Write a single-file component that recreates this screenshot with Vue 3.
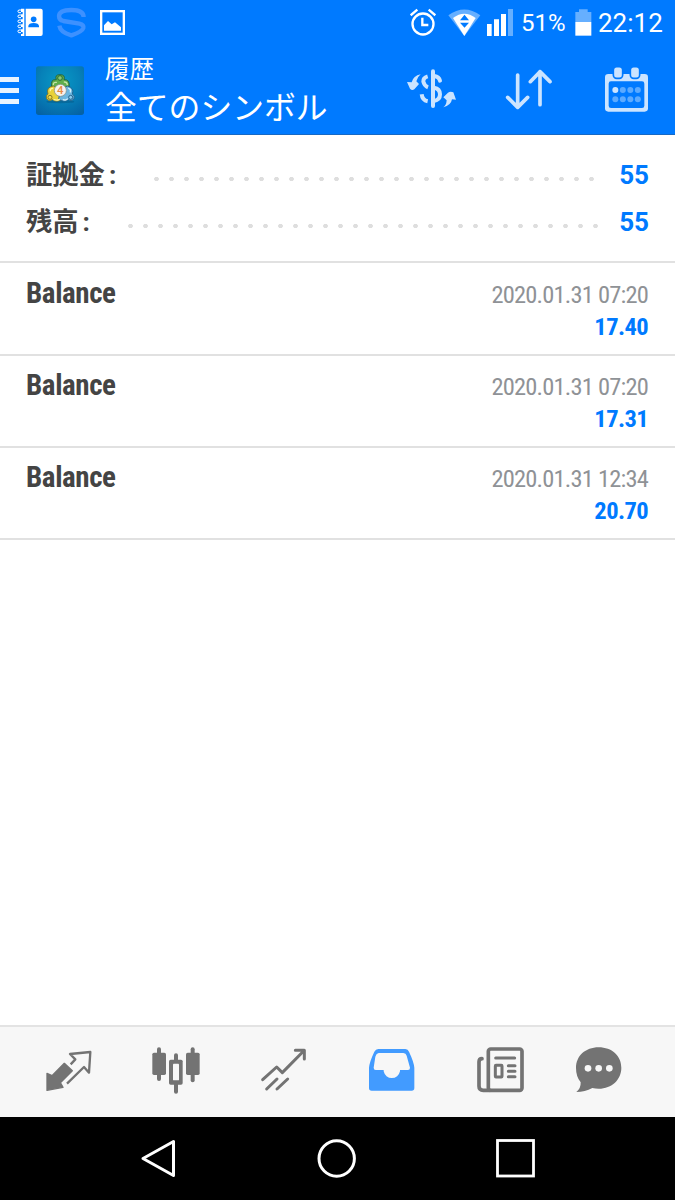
<template>
  <div class="screen">
    <div class="status-bar">
      <svg class="status-contacts" width="28" height="29" viewBox="48 24 84 87">
        <path fill="#fff" d="M77 26H122Q128 26 128 32V102Q128 108 122 108H77Z" />
        <path fill="#fff" d="M63 26H73V108H63V102H68V96H63V88H68V81H63V73H68V66H63V58H68V51H63V43H68V36H63Z" />
        <path fill="none" stroke="#fff" stroke-width="3" d="M65 30H56Q51 33 56 38H63M63 45H56Q51 48 56 53H63M63 60H56Q51 63 56 68H63M63 75H56Q51 78 56 83H63M63 90H56Q51 93 56 98H63" />
        <circle cx="101" cy="58" r="8.5" fill="#007aff" />
        <path fill="#007aff" d="M85 82V78Q86 69 101 69T117 78V82Z" />
      </svg>
      <svg class="status-s" width="31" height="31" viewBox="168 21 93 93">
        <path fill="none" stroke="#3d91ff" stroke-width="13" d="M251 51Q250 30 214 30T177 48Q177 60 190 63L238 71Q252 74 250 84Q247 95 214 106Q181 97 178 77" />
      </svg>
      <svg class="status-image" width="25" height="25" viewBox="300 30 75 75">
        <rect x="303.500" y="33.500" width="68" height="68" fill="none" stroke="#fff" stroke-width="7" />
        <path fill="#fff" d="M312 92V76L324 63L335 73L345 67L363 82V92Z" />
      </svg>

      <svg class="status-alarm" width="26" height="28" viewBox="30 24 78 84">
        <circle cx="69" cy="72" r="31.500" fill="none" stroke="#fff" stroke-width="7" />
        <path fill="none" stroke="#fff" stroke-width="7" d="M32 46L52 29M86 29L106 46M67 53V75H85" />
      </svg>
      <svg class="status-wifi" width="33" height="27" viewBox="144 27 99 81">
        <path fill="#fff" fill-opacity=".4" d="M145 46Q193 11 241 46L193 108Z" />
        <path fill="#fff" d="M159 54Q193 28 227 54L193 108Z" />
        <path fill="#007aff" d="M180 61L193.500 44L207 61ZM180 68H207L193.500 83Z" />
      </svg>
      <svg class="status-signal" width="28" height="29" viewBox="258 24 84 87">
        <path fill="#fff" d="M261 72H275V108H261ZM282 58H297V108H282ZM303 42H318V108H303Z" />
        <path fill="#fff" fill-opacity=".4" d="M324 27H339V108H324Z" />
      </svg>
      <span class="battery-level">51%</span>
      <svg class="status-battery" width="18" height="28" viewBox="522 24 54 84">
        <path fill="#fff" fill-opacity=".4" d="M526 36H537V28H563V36H574V66H526Z" />
        <path fill="#fff" d="M526 66H574V107H526Z" />
      </svg>
      <span class="clock">22:12</span>
    </div>

    <header class="app-bar">
      <div class="menu-button">
        <span></span>
        <span></span>
        <span></span>
      </div>
      <svg class="app-logo" width="48" height="49" viewBox="108 198 144 147">
        <defs>
          <radialGradient id="logo-bg" cx=".5" cy=".3" r=".8">
            <stop offset="0" stop-color="#0799c6" />
            <stop offset=".5" stop-color="#0782b9" />
            <stop offset="1" stop-color="#0562a4" />
          </radialGradient>
        </defs>
        <rect x="108" y="199" width="144" height="146" rx="8" fill="url(#logo-bg)" />
        <ellipse cx="181" cy="305" rx="42" ry="5" fill="#044e78" opacity=".4" />
        <!-- three figures around the version badge -->
        <g stroke-width="2.500">
          <path fill="#5fae4b" stroke="#245c35" d="M155 262Q150 237 169 239Q163 224 180 224T192 239Q211 238 207 262L181 272Z" />
          <path fill="#e8d13a" stroke="#77702a" d="M160 258Q137 262 144 282Q136 286 140 297Q147 306 157 299Q172 309 187 297L181 270Z" />
          <path fill="#6bb5df" stroke="#1d5b86" d="M202 258Q224 264 217 282Q226 287 222 297Q214 306 205 299Q190 309 176 297L181 270Z" />
        </g>
        <g fill="none" stroke-width="4" stroke-linecap="round">
          <path stroke="#c4e4a5" d="M160 254Q160 246 169 247M193 246Q201 246 202 254" />
          <path stroke="#fff6a0" d="M151 272Q150 266 158 265M162 299Q171 302 178 298" />
          <path stroke="#d3eefa" d="M206 265Q214 268 211 276M190 299Q196 302 202 297" />
        </g>
        <circle cx="180" cy="234" r="7" fill="#8cc873" stroke="#2b6e36" stroke-width="3" />
        <circle cx="150" cy="292" r="6" fill="#f1dc4c" stroke="#8b7a22" stroke-width="3" />
        <circle cx="212" cy="292" r="6" fill="#8bcbed" stroke="#24628c" stroke-width="3" />
        <circle cx="181" cy="271" r="18" fill="#f6f3ee" stroke="#7e8a80" stroke-width="2" />
        <text x="181" y="283" text-anchor="middle" class="logo-number">4</text>
      </svg>
      <div class="titles">
        <div class="subtitle">履歴</div>
        <div class="title">全てのシンボル</div>
      </div>
      <svg class="icon-currency" width="49" height="40" viewBox="36 42 147 120">
        <g fill="none" stroke="#cce4ff" stroke-width="12">
          <path stroke-linecap="round" d="M114 49V153" />
          <path d="M98 64Q84 68 85 80Q88 93 99 97M80 118Q82 136 98 139" />
          <path stroke-linecap="round" d="M118 63Q132 65 135 77" />
          <path d="M117 98Q135 101 135 118T117 138" />
        </g>
        <path fill="#cce4ff" d="M77 58Q67 66 64 79L72 87L58 103Q51 108 45 101L36 81L50 82Q55 62 77 58Z" />
        <path fill="#cce4ff" d="M145 157Q154 151 155 136L145 127L159 113Q166 108 175 112L183 134L171 133Q168 151 145 157Z" />
      </svg>
      <svg class="icon-sort" width="47" height="41" viewBox="330 42 141 123">
        <path class="sort-line" d="M368 60V157M338 127L368 157L398 127M435 149V50M406 80L435 50L465 80" />
      </svg>
      <svg class="icon-calendar" width="43" height="45" viewBox="630 35 129 135">
        <rect x="630" y="56" width="129" height="113" rx="10" fill="#cce4ff" />
        <rect x="641" y="78" width="107" height="80" rx="7" fill="#007aff" />
        <g fill="#cce4ff" stroke="#007aff" stroke-width="5">
          <rect x="655" y="34" width="28" height="35" rx="10" />
          <rect x="706" y="34" width="28" height="35" rx="10" />
        </g>
        <circle
          v-for="dot in calendarDots"
          :key="dot.id"
          :cx="dot.x"
          :cy="dot.y"
          r="9"
          fill="#cce4ff"
          :opacity="dot.id === 0 ? 1 : 0.45"
        />
      </svg>
    </header>

    <section class="summary">
      <div v-for="item in summary" :key="item.label" class="summary-row">
        <span class="summary-label">{{ item.label }}<i>:</i></span>
        <span class="dots" :style="{ width: item.dots * 15 + 'px' }"></span>
        <span class="summary-value">{{ item.value }}</span>
      </div>
    </section>

    <main class="history">
      <div v-for="(deal, index) in deals" :key="index" class="deal">
        <div class="deal-type">Balance</div>
        <div class="deal-info">
          <div class="deal-date">{{ deal.date }}</div>
          <div class="deal-amount">{{ deal.amount }}</div>
        </div>
      </div>
    </main>

    <nav class="tabs">
      <svg width="48" height="48" viewBox="72 96 144 144">
        <path fill="#737373" stroke="#737373" stroke-width="4" stroke-linejoin="round" d="M133 145L157 167L121 203L129 217L81 226V175L96 182Z" />
        <path fill="none" stroke="#737373" stroke-width="7" stroke-linejoin="round" d="M152 148L166 133L150 117L211 111L207 173L192 156L141 206" />
      </svg>
      <svg width="48" height="48" viewBox="396 96 144 144">
        <g fill="#737373">
          <rect x="397" y="113" width="41" height="67" rx="5" />
          <rect x="411" y="97" width="12" height="101" rx="6" />
          <rect x="498" y="113" width="41" height="67" rx="5" />
          <rect x="512" y="97" width="12" height="105" rx="6" />
          <rect x="447" y="134" width="41" height="75" rx="5" />
          <rect x="462" y="115" width="12" height="121" rx="6" />
        </g>
        <rect x="459" y="146" width="18" height="50" rx="2" fill="#f7f7f7" />
      </svg>
      <svg width="48" height="48" viewBox="720 96 144 144">
        <path class="trend-line" d="M728 194L770 156L787 173L851 108M826 106H853V132M740 222L771 192M771 222L803 192" />
      </svg>
      <svg width="48" height="48" viewBox="84 96 144 144">
        <path fill="#429bff" fill-rule="evenodd" d="M115 102H196Q204 102 207 110Q222 142 223 158V219Q223 227 215 227H95Q87 227 87 219V158Q88 142 103 110Q107 102 115 102ZM116 114Q109 115 106 125L101 158Q101 165 107 165H131V169A25 25 0 0 0 180 169V165H204Q210 165 210 158L200 122Q198 115 190 114Z" />
      </svg>
      <svg width="48" height="48" viewBox="408 96 144 144">
        <g fill="none" stroke="#737373" stroke-linecap="round">
          <rect x="445" y="102" width="101" height="124" rx="7" stroke-width="11" />
          <path stroke-width="11" d="M426 131Q417 131 417 141V214Q417 226 430 226H450" />
          <rect x="466" y="151" width="20" height="35" rx="2" stroke-width="9" />
          <path stroke-width="9" d="M467 129H524M505 152H525M505 169H525M505 185H525" />
        </g>
      </svg>
      <svg class="tab-chat" width="48" height="48" viewBox="705 96 144 144">
        <path fill="#737373" d="M776 97C816 97 844 123 844 158S816 221 776 221Q766 221 757 219Q735 231 709 231Q723 220 722 202Q708 185 708 159C708 123 736 97 776 97Z" />
        <g fill="#f7f7f7">
          <circle cx="744" cy="160" r="10" />
          <circle cx="776" cy="160" r="10" />
          <circle cx="808" cy="160" r="10" />
        </g>
      </svg>
    </nav>

    <div class="system-nav">
      <svg width="36" height="42" viewBox="0 0 36 42">
        <path fill="none" stroke="#fff" stroke-width="3" stroke-linejoin="round" d="M33.500 3.500V37.500L3 20.500Z" />
      </svg>
      <svg width="42" height="42" viewBox="0 0 42 42">
        <circle cx="21.700" cy="20.500" r="17.700" fill="none" stroke="#fff" stroke-width="3" />
      </svg>
      <svg width="42" height="42" viewBox="0 0 42 42">
        <rect x="2.500" y="2.500" width="36" height="35.500" fill="none" stroke="#fff" stroke-width="2.800" />
      </svg>
    </div>
  </div>
</template>

<script setup>
const summary = [
  { label: '証拠金', value: '55', dots: 30 },
  { label: '残高', value: '55', dots: 32 }
]

const deals = [
  { date: '2020.01.31 07:20', amount: '17.40' },
  { date: '2020.01.31 07:20', amount: '17.31' },
  { date: '2020.01.31 12:34', amount: '20.70' }
]

// two rows of four days
const calendarDots = Array.from({ length: 8 }, (_, id) => ({
  id,
  x: 661 + (id % 4) * 22.5,
  y: id < 4 ? 104 : 132
}))
</script>

<style>
body {
  margin: 0;
  background: #fff;
}
</style>

<style scoped>
.screen {
  display: flex;
  flex-direction: column;
  width: 675px;
  height: 1200px;
  overflow: hidden;
  background: #fff;
  font-family: Roboto, "Noto Sans CJK JP", sans-serif;
}

svg {
  display: block;
  flex: none;
}

.status-bar {
  display: flex;
  align-items: flex-start;
  box-sizing: border-box;
  height: 46px;
  padding: 8px 0 0 16px;
  background: #007aff;
  color: #fff;
  white-space: nowrap;
}

.status-s {
  margin: -1px 0 0 12px;
}

.status-image {
  margin: 2px 0 0 13px;
}

.status-alarm {
  margin-left: 285px;
}

.status-wifi {
  margin: 1px 0 0 12px;
}

.status-signal {
  margin-left: 5px;
}

.battery-level {
  width: 53px;
  margin-left: 7px;
  font-size: 24px;
  line-height: 31px;
}

.clock {
  margin-left: 6px;
  font-size: 26px;
  line-height: 31px;
}

.app-bar {
  display: flex;
  align-items: flex-start;
  box-sizing: border-box;
  height: 89px;
  border-bottom: 1px solid #1769c4;
  background: #007aff;
}

.menu-button {
  display: flex;
  flex-direction: column;
  gap: 6px;
  width: 19px;
  margin-top: 31px;
}

.menu-button span {
  height: 5px;
  background: #e8f3ff;
}

.app-logo {
  margin: 20px 0 0 17px;
}

.logo-number {
  fill: #e98a43;
  font-size: 34px;
  font-weight: 500;
}

.titles {
  width: 302px;
  margin-left: 21px;
  color: #fff;
  white-space: nowrap;
}

.subtitle {
  margin-top: 8px;
  font-size: 24.5px;
  line-height: 32px;
}

.title {
  margin-top: 2px;
  font-size: 31.8px;
  line-height: 40px;
}

.icon-currency {
  margin-top: 23px;
}

.icon-sort {
  margin: 23px 0 0 49px;
}

.icon-calendar {
  margin: 21px 0 0 53px;
}

.sort-line {
  fill: none;
  stroke: #cce4ff;
  stroke-width: 11;
  stroke-linecap: round;
  stroke-linejoin: round;
}

.summary {
  box-sizing: border-box;
  height: 128px;
  padding: 16px 26px 0;
  border-bottom: 2px solid #e1e1e1;
}

.summary-row {
  display: flex;
  align-items: center;
  height: 47px;
}

.summary-label {
  color: #444;
  font-size: 26.3px;
  font-weight: 700;
  line-height: 40px;
}

.summary-label i {
  margin-left: 4px;
  font-style: normal;
}

.dots {
  flex: none;
  height: 4px;
  margin: 9px 20px 0 auto;
  background: radial-gradient(circle, #dedede 2px, transparent 2.6px) left / 15px 4px repeat-x;
}

.summary-row:last-child .dots {
  margin-right: 16px;
}

.summary-value {
  color: #007aff;
  font-size: 26px;
  font-weight: 700;
}

.history {
  padding-top: 1px;
}

.deal {
  display: flex;
  justify-content: space-between;
  box-sizing: border-box;
  height: 92px;
  padding: 0 27px 0 26px;
  border-bottom: 2px solid #e1e1e1;
  white-space: nowrap;
}

.deal-type {
  margin-top: 11px;
  color: #444;
  font-size: 29px;
  font-weight: 700;
  font-stretch: 75%;
  letter-spacing: -0.4px;
  line-height: 36px;
}

.deal-info {
  margin-top: 15px;
  font-size: 24.5px;
  font-stretch: 75%;
  line-height: 32px;
  text-align: right;
}

.deal-date {
  color: #8f9296;
  letter-spacing: -0.8px;
}

.deal-amount {
  color: #007aff;
  font-weight: 700;
  letter-spacing: -0.6px;
}

.tabs {
  display: flex;
  gap: 60px;
  box-sizing: border-box;
  height: 92px;
  margin-top: auto;
  padding: 20px 0 0 44px;
  border-top: 2px solid #e3e3e3;
  background: #f7f7f7;
}

.tab-chat {
  margin-left: -9px;
}

.trend-line {
  fill: none;
  stroke: #737373;
  stroke-width: 9;
  stroke-linecap: round;
  stroke-linejoin: round;
}

.system-nav {
  display: flex;
  align-items: flex-start;
  justify-content: space-between;
  box-sizing: border-box;
  height: 83px;
  padding: 21px 138px 0 140px;
  background: #000;
}
</style>
